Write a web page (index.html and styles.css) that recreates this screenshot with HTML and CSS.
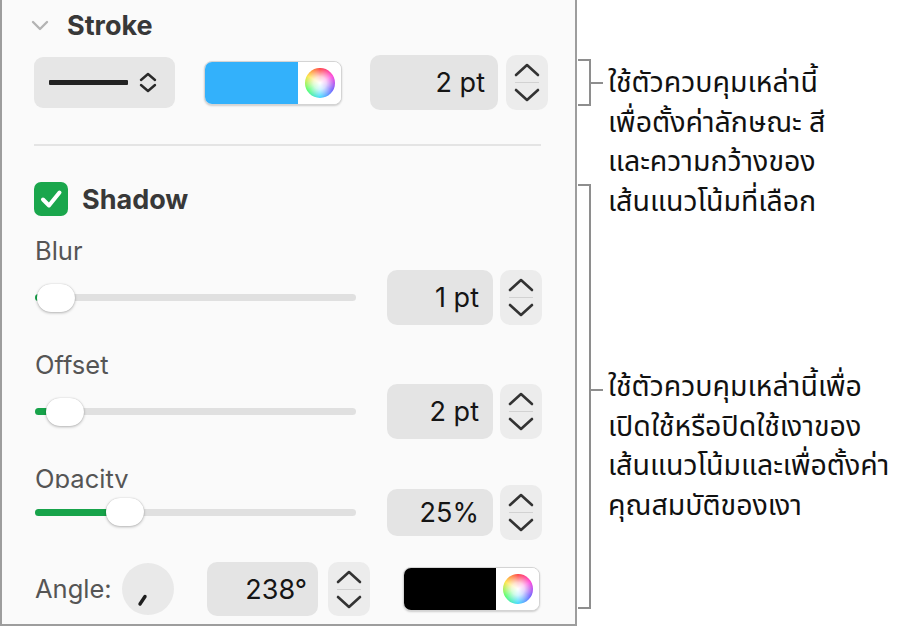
FILE: index.html
```html
<!DOCTYPE html>
<html lang="th">
<head>
<meta charset="utf-8">
<link rel="stylesheet" href="styles.css">
</head>
<body>
<div class="page">
  <section class="panel">
    <div class="section-head">
      <svg class="disclosure" width="18" height="12" viewBox="0 0 18 12"><polyline points="2,2 9,9 16,2" fill="none" stroke="#b4b4b4" stroke-width="2.4" stroke-linecap="round" stroke-linejoin="round"/></svg>
      <span class="title">Stroke</span>
    </div>

    <div class="row row-stroke">
      <div class="popup">
        <span class="line-sample"></span>
        <svg class="updown" width="18" height="22" viewBox="0 0 18 22"><polyline points="2,8 9,2 16,8" fill="none" stroke="#2a2a2a" stroke-width="2.4" stroke-linecap="round" stroke-linejoin="round"/><polyline points="2,13 9,19 16,13" fill="none" stroke="#2a2a2a" stroke-width="2.4" stroke-linecap="round" stroke-linejoin="round"/></svg>
      </div>
      <div class="well well-stroke">
        <span class="swatch swatch-blue"></span>
        <span class="wheel-box"><span class="wheel"></span></span>
      </div>
      <div class="field field-stroke">2 pt</div>
      <div class="stepper stepper-stroke">
        <svg width="42" height="55" viewBox="0 0 42 55"><polyline points="10,20 21,10 32,20" fill="none" stroke="#333" stroke-width="2.6" stroke-linecap="round" stroke-linejoin="round"/><line x1="9" y1="27.5" x2="33" y2="27.5" stroke="#d2d2d2" stroke-width="1"/><polyline points="10,35 21,45 32,35" fill="none" stroke="#333" stroke-width="2.6" stroke-linecap="round" stroke-linejoin="round"/></svg>
      </div>
    </div>

    <div class="divider"></div>

    <div class="check-row">
      <span class="checkbox"><svg width="34" height="34" viewBox="0 0 34 34"><polyline points="9,17.5 15,23.5 25.5,10.5" fill="none" stroke="#fff" stroke-width="4" stroke-linecap="round" stroke-linejoin="round"/></svg></span>
      <span class="title">Shadow</span>
    </div>

    <div class="label label-blur">Blur</div>
    <div class="row slider-row">
      <div class="slider">
        <div class="track"><div class="fill" style="width:6px"></div></div>
        <div class="thumb" style="left:3px"></div>
      </div>
      <div class="field field-num">1 pt</div>
      <div class="stepper">
        <svg width="42" height="55" viewBox="0 0 42 55"><polyline points="10,20 21,10 32,20" fill="none" stroke="#333" stroke-width="2.6" stroke-linecap="round" stroke-linejoin="round"/><line x1="9" y1="27.5" x2="33" y2="27.5" stroke="#d2d2d2" stroke-width="1"/><polyline points="10,35 21,45 32,35" fill="none" stroke="#333" stroke-width="2.6" stroke-linecap="round" stroke-linejoin="round"/></svg>
      </div>
    </div>

    <div class="label label-offset">Offset</div>
    <div class="row slider-row">
      <div class="slider">
        <div class="track"><div class="fill" style="width:14px"></div></div>
        <div class="thumb" style="left:12px"></div>
      </div>
      <div class="field field-num">2 pt</div>
      <div class="stepper">
        <svg width="42" height="55" viewBox="0 0 42 55"><polyline points="10,20 21,10 32,20" fill="none" stroke="#333" stroke-width="2.6" stroke-linecap="round" stroke-linejoin="round"/><line x1="9" y1="27.5" x2="33" y2="27.5" stroke="#d2d2d2" stroke-width="1"/><polyline points="10,35 21,45 32,35" fill="none" stroke="#333" stroke-width="2.6" stroke-linecap="round" stroke-linejoin="round"/></svg>
      </div>
    </div>

    <div class="label label-opacity">Opacity</div>
    <div class="row slider-row slider-row-opacity">
      <div class="slider">
        <div class="track"><div class="fill" style="width:76px"></div></div>
        <div class="thumb" style="left:72px"></div>
      </div>
      <div class="field field-num field-short">25%</div>
      <div class="stepper">
        <svg width="42" height="55" viewBox="0 0 42 55"><polyline points="10,20 21,10 32,20" fill="none" stroke="#333" stroke-width="2.6" stroke-linecap="round" stroke-linejoin="round"/><line x1="9" y1="27.5" x2="33" y2="27.5" stroke="#d2d2d2" stroke-width="1"/><polyline points="10,35 21,45 32,35" fill="none" stroke="#333" stroke-width="2.6" stroke-linecap="round" stroke-linejoin="round"/></svg>
      </div>
    </div>

    <div class="row angle-row">
      <span class="label angle-label">Angle:</span>
      <span class="knob"><svg width="52" height="52" viewBox="0 0 52 52"><line x1="23" y1="33.5" x2="18" y2="41" stroke="#1e1e1e" stroke-width="3.4" stroke-linecap="round"/></svg></span>
      <div class="field field-angle">238°</div>
      <div class="stepper stepper-angle">
        <svg width="42" height="55" viewBox="0 0 42 55"><polyline points="10,20 21,10 32,20" fill="none" stroke="#333" stroke-width="2.6" stroke-linecap="round" stroke-linejoin="round"/><line x1="9" y1="27.5" x2="33" y2="27.5" stroke="#d2d2d2" stroke-width="1"/><polyline points="10,35 21,45 32,35" fill="none" stroke="#333" stroke-width="2.6" stroke-linecap="round" stroke-linejoin="round"/></svg>
      </div>
      <div class="well well-shadow">
        <span class="swatch swatch-black"></span>
        <span class="wheel-box"><span class="wheel"></span></span>
      </div>
    </div>
  </section>

  <aside class="callouts">
    <div class="callout callout-stroke">
      <span class="bracket bracket-stroke"></span>
      <span class="tick tick-stroke"></span>
      <p class="note note-stroke">ใช้ตัวควบคุมเหล่านี้<br>เพื่อตั้งค่าลักษณะ สี<br>และความกว้างของ<br>เส้นแนวโน้มที่เลือก</p>
    </div>
    <div class="callout callout-shadow">
      <span class="bracket bracket-shadow"></span>
      <span class="tick tick-shadow"></span>
      <p class="note note-shadow">ใช้ตัวควบคุมเหล่านี้เพื่อ<br>เปิดใช้หรือปิดใช้เงาของ<br>เส้นแนวโน้มและเพื่อตั้งค่า<br>คุณสมบัติของเงา</p>
    </div>
  </aside>
</div>
</body>
</html>
```

FILE: styles.css
```css
html, body {
  margin: 0;
  padding: 0;
  background: #ffffff;
}

body {
  font-family: Inter, "Noto Sans", "Liberation Sans", sans-serif;
  color: #1d1d1d;
}

.page {
  display: flex;
  align-items: flex-start;
  width: 902px;
  height: 627px;
  overflow: hidden;
}

/* ---------- panel ---------- */
.panel {
  box-sizing: border-box;
  width: 577px;
  height: 626px;
  flex: none;
  background: #fafafa;
  border-left: 2px solid #9d9d9d;
  border-right: 2px solid #9d9d9d;
  border-bottom: 2px solid #9d9d9d;
  padding-left: 32px;
  display: flex;
  flex-direction: column;
  align-items: flex-start;
}

.section-head {
  height: 50px;
  display: flex;
  align-items: center;
}

.disclosure {
  margin-left: -3px;
  margin-right: 18px;
  margin-top: 2px;
}

.title {
  font-size: 27px;
  font-weight: 700;
  color: #383838;
}

.row {
  display: flex;
  align-items: center;
}

.row-stroke {
  margin-top: 5px;
  height: 55px;
}

.popup {
  box-sizing: border-box;
  width: 141px;
  height: 51px;
  border-radius: 9px;
  background: #e6e6e6;
  display: flex;
  align-items: center;
  padding-left: 15px;
}

.line-sample {
  width: 79px;
  height: 5px;
  background: #222;
  border-radius: 1px;
}

.updown {
  margin-left: 11px;
}

.well {
  box-sizing: border-box;
  height: 44px;
  border-radius: 8px;
  background: #ffffff;
  border: 1px solid #d4d4d4;
  box-shadow: 0 1px 2px rgba(0, 0, 0, 0.18);
  display: flex;
  overflow: hidden;
}

.well-stroke {
  width: 138px;
  margin-left: 29px;
}

.swatch {
  flex: 1;
  height: 100%;
}

.swatch-blue {
  background: #33b1fb;
}

.swatch-black {
  background: #000000;
}

.wheel-box {
  width: 43px;
  display: flex;
  align-items: center;
  justify-content: center;
  background: #fff;
}

.wheel {
  width: 30px;
  height: 30px;
  border-radius: 50%;
  background:
    radial-gradient(circle, rgba(255,255,255,1) 0%, rgba(255,255,255,0.75) 30%, rgba(255,255,255,0) 72%),
    conic-gradient(#ff3b3b, #ff3bd8, #6a5cff, #3ad8ff, #4cff6a, #ffe23b, #ff3b3b);
}

.field {
  box-sizing: border-box;
  height: 55px;
  border-radius: 10px;
  background: #e4e4e4;
  display: flex;
  align-items: center;
  justify-content: flex-end;
  font-size: 27px;
  color: #151515;
}

.field-stroke {
  width: 128px;
  margin-left: 28px;
  padding-right: 13px;
}

.stepper {
  width: 42px;
  height: 55px;
  border-radius: 10px;
  background: #ececec;
  margin-left: 7px;
  display: flex;
}

.stepper-stroke {
  margin-left: 8px;
}

.divider {
  margin-top: 34px;
  width: 507px;
  height: 2px;
  background: #e4e4e4;
}

.check-row {
  margin-top: 36px;
  height: 34px;
  display: flex;
  align-items: center;
}

.checkbox {
  width: 34px;
  height: 34px;
  border-radius: 7px;
  background: #1aa64c;
  display: flex;
  margin-right: 14px;
}

.label {
  font-size: 25.5px;
  line-height: 30px;
  color: #555555;
  padding-left: 1px;
}

.label-blur {
  margin-top: 20px;
}

.label-offset,
.label-opacity {
  margin-top: 25px;
}

.label-opacity {
  height: 24px;
  overflow: hidden;
}

.slider-row {
  margin-top: 4px;
  height: 55px;
}

.slider-row-opacity {
  margin-top: -3px;
  height: 54px;
}

.slider {
  position: relative;
  width: 322px;
  height: 30px;
  display: flex;
  align-items: center;
}

.track {
  width: 100%;
  height: 7px;
  border-radius: 4px;
  background: #e0e0e0;
  overflow: hidden;
  margin-left: 1px;
}

.fill {
  height: 100%;
  background: #17a34a;
}

.thumb {
  position: absolute;
  top: 1px;
  width: 38px;
  height: 28px;
  border-radius: 14px;
  background: #ffffff;
  box-shadow: 0 1px 3px rgba(0, 0, 0, 0.28), 0 0 1px rgba(0, 0, 0, 0.2);
}

.field-num {
  width: 106px;
  margin-left: 31px;
  padding-right: 14px;
}

.field-short {
  height: 47px;
}

.angle-row {
  margin-top: 23px;
  height: 54px;
}

.angle-label {
  width: 88px;
  padding-left: 1px;
  box-sizing: border-box;
  color: #555;
}

.knob {
  width: 52px;
  height: 52px;
  border-radius: 50%;
  background: #e9e9e9;
  display: flex;
}

.field-angle {
  width: 111px;
  height: 54px;
  margin-left: 33px;
  padding-right: 11px;
}

.stepper-angle {
  height: 54px;
  margin-left: 10px;
}

.well-shadow {
  width: 137px;
  margin-left: 33px;
}

/* ---------- callouts ---------- */
.callouts {
  margin-left: 1px;
  display: flex;
  flex-direction: column;
}

.callout {
  display: flex;
  align-items: flex-start;
}

.callout-stroke {
  margin-top: 59px;
  height: 125px;
}

.bracket {
  box-sizing: border-box;
  width: 13px;
  border: 2px solid #8e8e8e;
  border-left: none;
  flex: none;
}

.bracket-stroke {
  height: 47px;
}

.bracket-shadow {
  height: 425px;
}

.tick {
  width: 12px;
  height: 2px;
  background: #8e8e8e;
  flex: none;
}

.tick-stroke {
  margin-top: 23px;
}

.tick-shadow {
  margin-top: 205px;
}

.note {
  margin: 0 0 0 5px;
  font-family: "Noto Sans Thai", "Noto Sans Thai UI", "Noto Sans", "DejaVu Sans", sans-serif;
  font-size: 28.5px;
  line-height: 39.5px;
  color: #111;
  white-space: nowrap;
}

.note-stroke {
  margin-top: 5px;
}

.note-shadow {
  margin-top: 184px;
}
```
